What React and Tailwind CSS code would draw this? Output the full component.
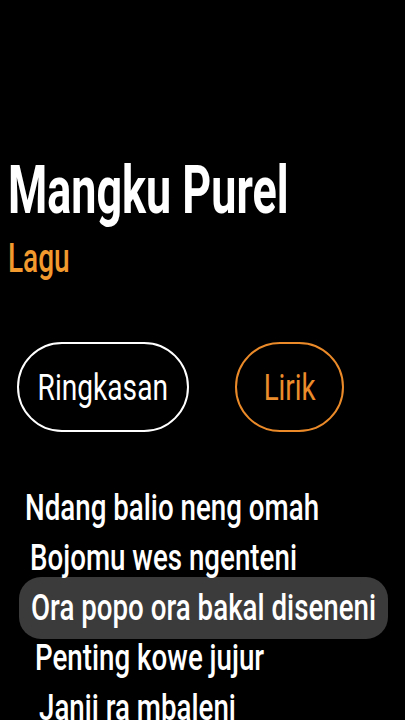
import React from 'react';

const lines = [
  { text: 'Ndang balio neng omah', indent: 'pl-[25px]' },
  { text: 'Bojomu wes ngenteni', indent: 'pl-[30px]' },
  { text: 'Ora popo ora bakal diseneni', indent: 'pl-[31px]', active: true },
  { text: 'Penting kowe jujur', indent: 'pl-[35px]' },
  { text: 'Janji ra mbaleni', indent: 'pl-[39px]' },
];

const LyricsView = () => {
  return (
    <div className="h-[720px] overflow-hidden bg-black font-['Roboto','Liberation_Sans',sans-serif] text-white">
      {/* judul */}
      <div className="flex items-start justify-between pt-[156px]">
        <div className="mt-[2px] pl-[8px]">
          <div className="h-[66px] text-[66px] leading-none font-bold whitespace-nowrap origin-left scale-x-[0.68]">
            Mangku Purel
          </div>
          <div className="mt-[15px] h-[40px] text-[40px] leading-none font-medium text-[#f29a2e] origin-left scale-x-[0.7]">
            Lagu
          </div>
        </div>
        <div className="mr-[20px] flex flex-col -space-y-[2px]">
          <span className="block h-[14px] w-[14px] rounded-full bg-white" />
          <span className="block h-[14px] w-[14px] rounded-full bg-white" />
          <span className="block h-[14px] w-[14px] rounded-full bg-white" />
        </div>
      </div>

      {/* tab */}
      <div className="mt-[63px] flex">
        <button className="ml-[17px] flex h-[90px] w-[172px] items-center justify-center rounded-full border-2 border-white">
          <span className="text-[37px] leading-none text-white scale-x-[0.76]">Ringkasan</span>
        </button>
        <button className="ml-[46px] flex h-[90px] w-[109px] items-center justify-center rounded-full border-2 border-[#ea8a29]">
          <span className="text-[37px] leading-none text-[#ec8c2b] scale-x-[0.75]">Lirik</span>
        </button>
      </div>

      {/* lirik */}
      <div className="mt-[51px]">
        {lines.map((line) =>
          line.active ? (
            <div
              key={line.text}
              className="-my-[6px] ml-[19px] w-[369px] rounded-[22px] bg-[#3b3b3b] py-[6px] pl-[12px]"
            >
              <div className="h-[50px] text-[36px] leading-[50px] font-medium whitespace-nowrap origin-left scale-x-[0.77]">
                {line.text}
              </div>
            </div>
          ) : (
            <div key={line.text} className={line.indent}>
              <div className="h-[50px] text-[36px] leading-[50px] font-medium whitespace-nowrap origin-left scale-x-[0.77]">
                {line.text}
              </div>
            </div>
          )
        )}
      </div>
    </div>
  );
};

export default LyricsView;
